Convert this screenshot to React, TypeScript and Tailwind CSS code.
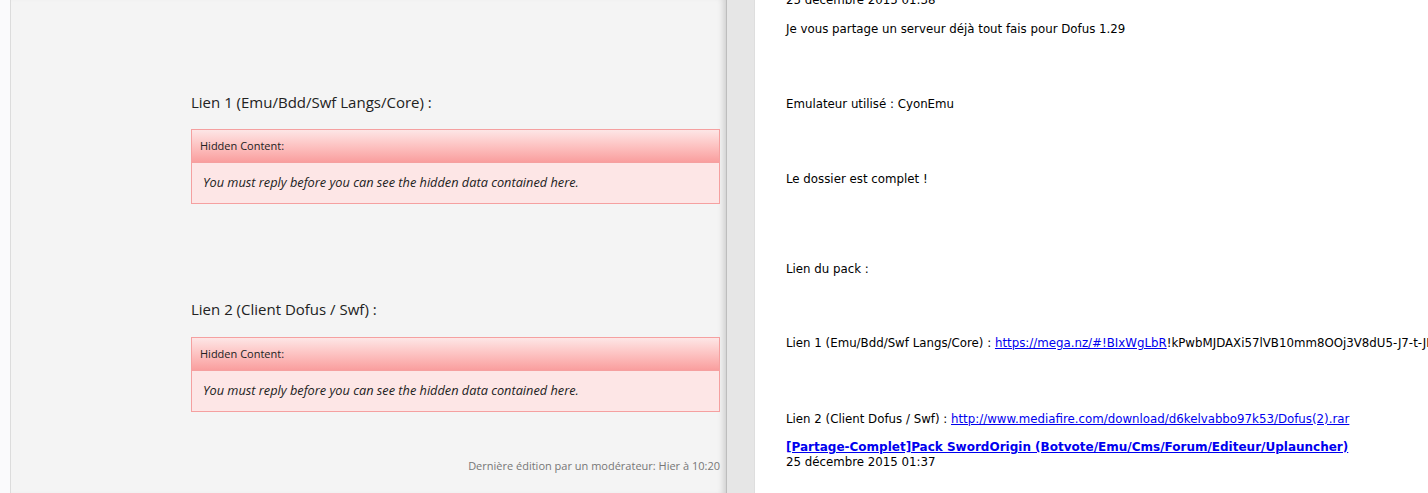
const HiddenBox = () => (
  <div className="border border-[#f5a0a0] bg-[#fde6e6]">
    <div className="flex h-[33px] items-center border-b border-[#f5a0a0] bg-gradient-to-b from-[#fde6e6] to-[#f99e9e] px-2 text-[11px] text-[#222]">
      Hidden Content:
    </div>
    <div className="flex h-[40px] items-center px-[11px] text-[12.75px] italic text-[#222]">
      You must reply before you can see the hidden data contained here.
    </div>
  </div>
);

const App = () => {
  return (
    <div className="flex h-[493px] w-full overflow-hidden bg-white">
      <div className="w-[10px] shrink-0 bg-[#fafafc]" />

      <section className="w-[716px] shrink-0 border-l border-[#dcdcdc] bg-[#f4f4f4] pl-[180px] pr-[6px] font-['Open_Sans',sans-serif] shadow-[inset_-7px_0_7px_-5px_rgba(0,0,0,0.18)]">
        <p className="mt-[92px] text-[15px] leading-[20px] text-[#222]">Lien 1 (Emu/Bdd/Swf Langs/Core) :</p>
        <div className="mt-[17px]">
          <HiddenBox />
        </div>

        <p className="mt-[95px] text-[15px] leading-[20px] text-[#222]">Lien 2 (Client Dofus / Swf) :</p>
        <div className="mt-[18px]">
          <HiddenBox />
        </div>

        <p className="mt-[46px] text-right text-[11px] leading-[16px] text-[#777]">
          Dernière édition par un modérateur: Hier à 10:20
        </p>
      </section>

      <div className="w-[1px] shrink-0 bg-[#bdbdbd]" />
      <div className="w-[28px] shrink-0 border-r border-[#dedede] bg-[#e6e6e6]" />

      <article className="min-w-0 flex-1 whitespace-nowrap pl-[31px] font-['DejaVu_Sans',sans-serif] text-[11.8px] leading-[15px] text-black">
        <p className="-mt-[7px]">25 décembre 2015 01:38</p>
        <p className="mt-[14px]">Je vous partage un serveur déjà tout fais pour Dofus 1.29</p>
        <p className="mt-[60px]">Emulateur utilisé : CyonEmu</p>
        <p className="mt-[60px]">Le dossier est complet !</p>
        <p className="mt-[75px]">Lien du pack :</p>
        <p className="mt-[59px]">
          Lien 1 (Emu/Bdd/Swf Langs/Core) :{" "}
          <a href="#" className="text-[#0000ee] underline">
            https://mega.nz/#!BIxWgLbR
          </a>
          !kPwbMJDAXi57lVB10mm8OOj3V8dU5-J7-t-JLkRKXbc
        </p>
        <p className="mt-[61px]">
          Lien 2 (Client Dofus / Swf) :{" "}
          <a href="#" className="text-[#0000ee] underline">
            http://www.mediafire.com/download/d6kelvabbo97k53/Dofus(2).rar
          </a>
        </p>
        <a href="#" className="mt-[12px] block text-[12px] font-bold leading-[16px] text-[#0000ee] underline">
          [Partage-Complet]Pack SwordOrigin (Botvote/Emu/Cms/Forum/Editeur/Uplauncher)
        </a>
        <p>25 décembre 2015 01:37</p>
      </article>
    </div>
  );
};

export default App;
